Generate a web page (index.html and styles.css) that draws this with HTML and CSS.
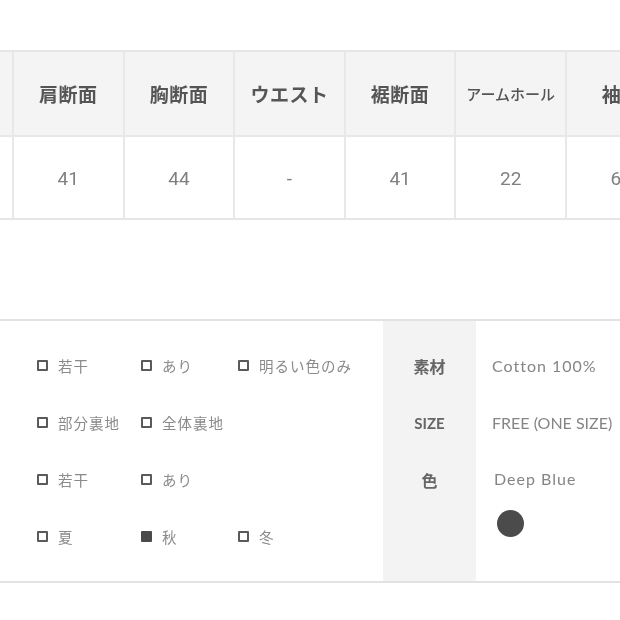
FILE: index.html
```html
<!DOCTYPE html>
<html lang="ja">
<head>
<meta charset="utf-8">
<link rel="stylesheet" href="styles.css">
</head>
<body>
<div class="page">
  <div class="size-wrap">
    <div class="size-table">
      <div class="cell head edge"></div>
      <div class="cell head">肩断面</div>
      <div class="cell head">胸断面</div>
      <div class="cell head">ウエスト</div>
      <div class="cell head">裾断面</div>
      <div class="cell head small">アームホール</div>
      <div class="cell head">袖丈</div>
      <div class="cell edge"></div>
      <div class="cell num">41</div>
      <div class="cell num">44</div>
      <div class="cell num">-</div>
      <div class="cell num">41</div>
      <div class="cell num">22</div>
      <div class="cell num">60</div>
    </div>
  </div>

  <div class="spec">
    <div class="checks">
      <div class="check-row">
        <span class="opt"><i class="box"></i>若干</span>
        <span class="opt"><i class="box"></i>あり</span>
        <span class="opt"><i class="box"></i>明るい色のみ</span>
      </div>
      <div class="check-row">
        <span class="opt"><i class="box"></i>部分裏地</span>
        <span class="opt"><i class="box"></i>全体裏地</span>
        <span class="opt"></span>
      </div>
      <div class="check-row">
        <span class="opt"><i class="box"></i>若干</span>
        <span class="opt"><i class="box"></i>あり</span>
        <span class="opt"></span>
      </div>
      <div class="check-row">
        <span class="opt"><i class="box"></i>夏</span>
        <span class="opt"><i class="box on"></i>秋</span>
        <span class="opt"><i class="box"></i>冬</span>
      </div>
    </div>
    <div class="labels">
      <div class="label">素材</div>
      <div class="label latin">SIZE</div>
      <div class="label">色</div>
    </div>
    <div class="values">
      <div class="value wide">Cotton 100%</div>
      <div class="value">FREE (ONE SIZE)</div>
      <div class="value color">
        <span class="wide">Deep Blue</span>
        <i class="dot"></i>
      </div>
    </div>
  </div>
</div>
</body>
</html>
```

FILE: styles.css
```css
html, body {
  margin: 0;
  padding: 0;
  background: #ffffff;
}

.page {
  width: 620px;
  height: 620px;
  overflow: hidden;
  font-family: "Noto Sans CJK JP", "Noto Sans", sans-serif;
  filter: blur(0.35px);
}

.size-wrap {
  margin-top: 50px;
  width: 620px;
  overflow: hidden;
}

.size-table {
  display: grid;
  grid-template-columns: 14px repeat(6, 110.6px);
  grid-template-rows: 85px 81px;
  width: 700px;
  border-top: 2px solid #e6e6e6;
  border-bottom: 2px solid #e6e6e6;
}

.cell {
  display: flex;
  align-items: center;
  justify-content: center;
  border-right: 2px solid #e8e8e8;
  box-sizing: border-box;
}

.head {
  background: #f4f4f4;
  border-bottom: 2px solid #e8e8e8;
  color: #555555;
  font-size: 19px;
  font-weight: 700;
  letter-spacing: 0.5px;
}

.head.small {
  font-size: 15px;
  font-weight: 500;
  letter-spacing: 0;
}

.num {
  font-family: Roboto, "Noto Sans", sans-serif;
  font-size: 19px;
  color: #808080;
  padding-top: 2px;
}

.spec {
  margin-top: 99px;
  display: flex;
  height: 264px;
  box-sizing: border-box;
  border-top: 2px solid #e2e2e2;
  border-bottom: 2px solid #e2e2e2;
}

.checks {
  width: 383px;
  padding-top: 16px;
  box-sizing: border-box;
}

.check-row {
  display: grid;
  grid-template-columns: 104px 97px auto;
  padding-left: 37px;
  height: 57px;
  align-items: center;
}

.opt {
  display: flex;
  align-items: center;
  font-size: 14.5px;
  color: #8a8a8a;
  letter-spacing: 1px;
  white-space: nowrap;
}

.box {
  display: inline-block;
  width: 7px;
  height: 7px;
  border: 2px solid #5a5a5a;
  margin-right: 10px;
  border-radius: 1px;
}

.box.on {
  background: #4a4a4a;
  border-color: #4a4a4a;
}

.labels {
  width: 93px;
  background: #f3f3f3;
  padding-top: 16px;
  box-sizing: border-box;
}

.label {
  height: 57px;
  display: flex;
  align-items: center;
  justify-content: center;
  font-size: 16px;
  font-weight: 700;
  color: #666666;
}

.label.latin {
  font-family: Lato, "Noto Sans", sans-serif;
  font-size: 15px;
  font-weight: 700;
}

.values {
  flex: 1;
  padding-top: 16px;
  padding-left: 16px;
  box-sizing: border-box;
}

.value {
  height: 57px;
  display: flex;
  align-items: center;
  font-family: Lato, "Noto Sans", sans-serif;
  font-size: 16px;
  color: #858585;
  white-space: nowrap;
}

.wide {
  letter-spacing: 1px;
}

.value.color {
  flex-direction: column;
  align-items: flex-start;
  justify-content: flex-start;
  padding-top: 18px;
  box-sizing: border-box;
  height: auto;
}

.value.color span {
  line-height: 20px;
  padding-left: 2px;
}

.dot {
  display: block;
  width: 27px;
  height: 27px;
  border-radius: 50%;
  background: #4b4b4b;
  margin-top: 21px;
  margin-left: 5px;
}
```
